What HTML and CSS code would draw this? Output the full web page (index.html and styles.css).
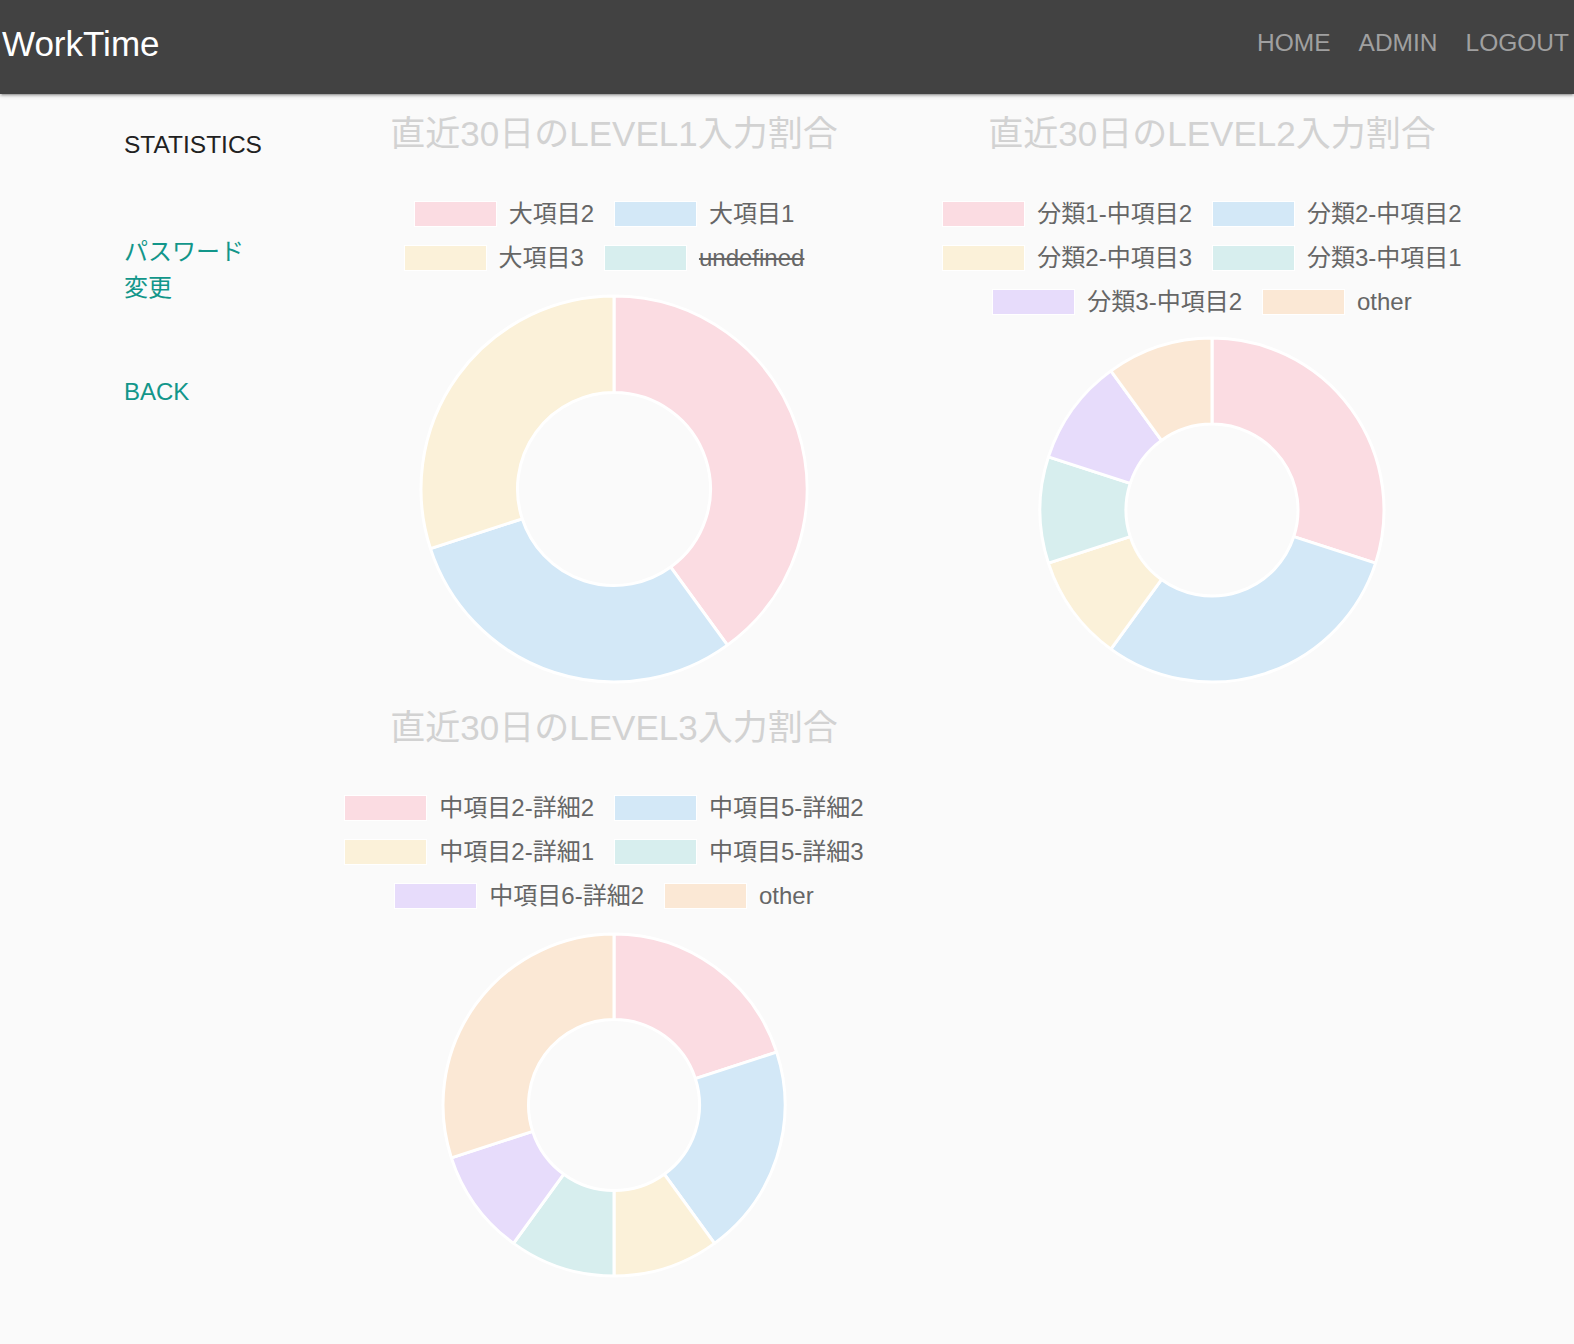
FILE: index.html
```html
<!DOCTYPE html>
<html lang="ja">
<head>
<meta charset="utf-8">
<title>WorkTime</title>
<link rel="stylesheet" href="styles.css">
</head>
<body>
<header class="topbar">
  <a class="brand">WorkTime</a>
  <nav class="nav">
    <a class="nav-link">HOME</a>
    <a class="nav-link">ADMIN</a>
    <a class="nav-link">LOGOUT</a>
  </nav>
</header>
<div class="page">
  <aside class="sidebar">
    <div class="side-item side-current">STATISTICS</div>
    <a class="side-item side-link side-pw">パスワード変更</a>
    <a class="side-item side-link">BACK</a>
  </aside>
  <main class="charts">
    <section class="chart">
      <h2 class="chart-title">直近30日のLEVEL1入力割合</h2>
      <div class="legend">
        <div class="legend-row">
          <div class="item"><span class="box c-pink"></span><span class="label">大項目2</span></div>
          <div class="item"><span class="box c-blue"></span><span class="label">大項目1</span></div>
        </div>
        <div class="legend-row">
          <div class="item"><span class="box c-yellow"></span><span class="label">大項目3</span></div>
          <div class="item"><span class="box c-teal"></span><span class="label hidden">undefined</span></div>
        </div>
      </div>
      <svg class="donut" width="390" height="390" viewBox="0 0 390 390">
        <path class="f-pink" d="M195 2 A193 193 0 0 1 308.44 351.14 L251.72 273.07 A96.5 96.5 0 0 0 195 98.5 Z"/>
        <path class="f-blue" d="M308.44 351.14 A193 193 0 0 1 11.45 254.64 L103.22 224.82 A96.5 96.5 0 0 0 251.72 273.07 Z"/>
        <path class="f-yellow" d="M11.45 254.64 A193 193 0 0 1 195 2 L195 98.5 A96.5 96.5 0 0 0 103.22 224.82 Z"/>
      </svg>
    </section>
    <section class="chart">
      <h2 class="chart-title">直近30日のLEVEL2入力割合</h2>
      <div class="legend">
        <div class="legend-row">
          <div class="item"><span class="box c-pink"></span><span class="label">分類1-中項目2</span></div>
          <div class="item"><span class="box c-blue"></span><span class="label">分類2-中項目2</span></div>
        </div>
        <div class="legend-row">
          <div class="item"><span class="box c-yellow"></span><span class="label">分類2-中項目3</span></div>
          <div class="item"><span class="box c-teal"></span><span class="label">分類3-中項目1</span></div>
        </div>
        <div class="legend-row">
          <div class="item"><span class="box c-purple"></span><span class="label">分類3-中項目2</span></div>
          <div class="item"><span class="box c-orange"></span><span class="label">other</span></div>
        </div>
      </div>
      <svg class="donut donut-tight" width="348" height="348" viewBox="0 0 348 348">
        <path class="f-pink" d="M174 2 A172 172 0 0 1 337.58 227.15 L255.79 200.58 A86 86 0 0 0 174 88 Z"/>
        <path class="f-blue" d="M337.58 227.15 A172 172 0 0 1 72.9 313.15 L123.45 243.58 A86 86 0 0 0 255.79 200.58 Z"/>
        <path class="f-yellow" d="M72.9 313.15 A172 172 0 0 1 10.42 227.15 L92.21 200.58 A86 86 0 0 0 123.45 243.58 Z"/>
        <path class="f-teal" d="M10.42 227.15 A172 172 0 0 1 10.42 120.85 L92.21 147.42 A86 86 0 0 0 92.21 200.58 Z"/>
        <path class="f-purple" d="M10.42 120.85 A172 172 0 0 1 72.9 34.85 L123.45 104.42 A86 86 0 0 0 92.21 147.42 Z"/>
        <path class="f-orange" d="M72.9 34.85 A172 172 0 0 1 174 2 L174 88 A86 86 0 0 0 123.45 104.42 Z"/>
      </svg>
    </section>
    <section class="chart">
      <h2 class="chart-title">直近30日のLEVEL3入力割合</h2>
      <div class="legend">
        <div class="legend-row">
          <div class="item"><span class="box c-pink"></span><span class="label">中項目2-詳細2</span></div>
          <div class="item"><span class="box c-blue"></span><span class="label">中項目5-詳細2</span></div>
        </div>
        <div class="legend-row">
          <div class="item"><span class="box c-yellow"></span><span class="label">中項目2-詳細1</span></div>
          <div class="item"><span class="box c-teal"></span><span class="label">中項目5-詳細3</span></div>
        </div>
        <div class="legend-row">
          <div class="item"><span class="box c-purple"></span><span class="label">中項目6-詳細2</span></div>
          <div class="item"><span class="box c-orange"></span><span class="label">other</span></div>
        </div>
      </div>
      <svg class="donut" width="346" height="346" viewBox="0 0 346 346">
        <path class="f-pink" d="M173 2 A171 171 0 0 1 335.63 120.16 L254.32 146.58 A85.5 85.5 0 0 0 173 87.5 Z"/>
        <path class="f-blue" d="M335.63 120.16 A171 171 0 0 1 273.51 311.34 L223.26 242.17 A85.5 85.5 0 0 0 254.32 146.58 Z"/>
        <path class="f-yellow" d="M273.51 311.34 A171 171 0 0 1 173 344 L173 258.5 A85.5 85.5 0 0 0 223.26 242.17 Z"/>
        <path class="f-teal" d="M173 344 A171 171 0 0 1 72.49 311.34 L122.74 242.17 A85.5 85.5 0 0 0 173 258.5 Z"/>
        <path class="f-purple" d="M72.49 311.34 A171 171 0 0 1 10.37 225.84 L91.69 199.42 A85.5 85.5 0 0 0 122.74 242.17 Z"/>
        <path class="f-orange" d="M10.37 225.84 A171 171 0 0 1 173 2 L173 87.5 A85.5 85.5 0 0 0 91.69 199.42 Z"/>
      </svg>
    </section>
  </main>
</div>
</body>
</html>
```

FILE: styles.css
```css
* { box-sizing: border-box; }

html, body {
  margin: 0;
  padding: 0;
  background: #fafafa;
  font-family: "Liberation Sans", "Noto Sans CJK JP", sans-serif;
}

.topbar {
  position: relative;
  z-index: 2;
  height: 94px;
  background: #424242;
  display: flex;
  align-items: flex-start;
  justify-content: space-between;
  box-shadow: 0 2px 2px 0 rgba(0,0,0,0.14), 0 3px 1px -2px rgba(0,0,0,0.12), 0 1px 5px 0 rgba(0,0,0,0.2);
}

.brand {
  margin-top: 24px;
  padding-left: 2px;
  font-size: 35px;
  line-height: 40px;
  color: #ffffff;
}

.nav {
  display: flex;
  gap: 28px;
  margin-top: 28px;
  padding-right: 5px;
}

.nav-link {
  font-size: 24.5px;
  line-height: 30px;
  color: #a0a0a0;
}

.page {
  display: flex;
  align-items: flex-start;
}

.sidebar {
  width: 315px;
  flex: none;
  padding: 33px 0 0 124px;
  display: flex;
  flex-direction: column;
  align-items: flex-start;
}

.side-item {
  display: block;
  width: 140px;
  font-size: 24px;
  line-height: 36px;
}

.side-current {
  color: #212121;
  font-size: 24.5px;
  margin-bottom: 71px;
}

.side-link {
  color: #12968a;
}

.side-pw {
  margin-bottom: 68px;
}

.charts {
  display: grid;
  grid-template-columns: 598px 598px;
  row-gap: 4px;
}

.chart {
  display: flex;
  flex-direction: column;
  align-items: center;
  padding-top: 19px;
}

.chart-title {
  margin: 0 0 36.7px;
  font-size: 35px;
  line-height: 42px;
  font-weight: normal;
  color: #d2d2d2;
  white-space: nowrap;
}

.legend {
  display: flex;
  flex-direction: column;
  align-self: stretch;
}

.legend-row {
  display: flex;
  justify-content: center;
  height: 44px;
  align-items: center;
}

.item {
  display: flex;
  align-items: center;
  margin-right: 20px;
}

.box {
  display: block;
  width: 83px;
  height: 26px;
  border: 1.5px solid #ffffff;
}

.label {
  margin-left: 12px;
  font-size: 24px;
  line-height: 30px;
  color: #666666;
  white-space: nowrap;
}

.label.hidden {
  text-decoration: line-through;
  text-decoration-thickness: 2px;
}

.c-pink { background: #fbdce2; }
.c-blue { background: #d3e8f7; }
.c-yellow { background: #fbf1d9; }
.c-teal { background: #d7eeee; }
.c-purple { background: #e7dcfb; }
.c-orange { background: #fbe8d5; }

.donut {
  display: block;
  margin-top: 14px;
}

.donut-tight {
  margin-top: 12.5px;
}

.donut path {
  stroke: #ffffff;
  stroke-width: 3;
  stroke-linejoin: bevel;
}

.f-pink { fill: #fbdce2; }
.f-blue { fill: #d3e8f7; }
.f-yellow { fill: #fbf1d9; }
.f-teal { fill: #d7eeee; }
.f-purple { fill: #e7dcfb; }
.f-orange { fill: #fbe8d5; }
```
